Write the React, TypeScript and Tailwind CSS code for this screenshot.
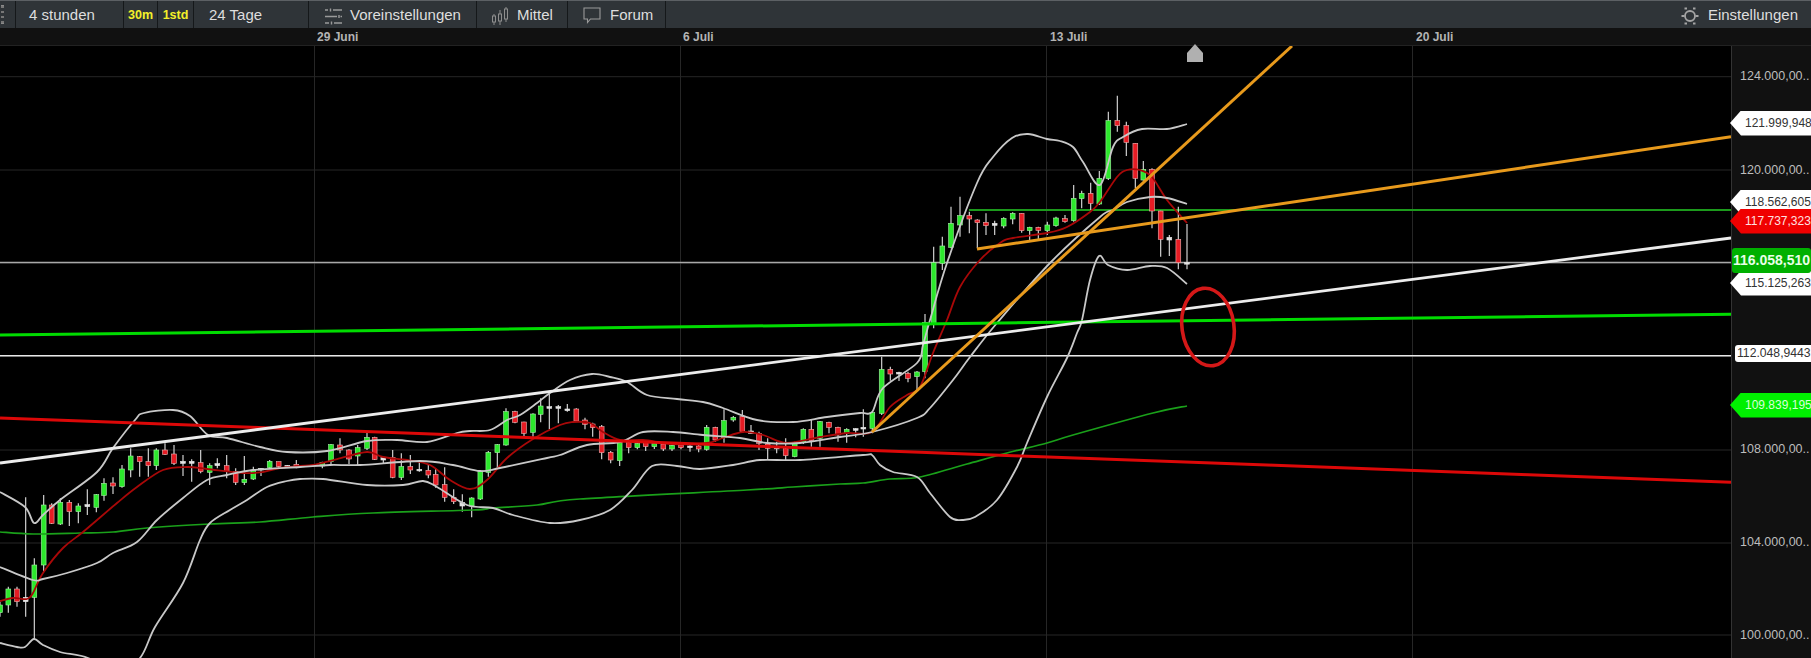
import { Fragment } from "react";

type Kind = "g" | "r" | "w";
type Candle = [number, number, number, number, number, Kind];

// candles read off the chart: [x, wick top, body top, body bottom, wick bottom]
// each group is measured at 3x from its own origin
const groups: { ox: number; oy: number; items: Candle[] }[] = [
  {
    ox: 0,
    oy: 420,
    items: [
      [0, 545, 555, 578, 590, "g"],
      [25, 500, 507, 555, 578, "g"],
      [51, 500, 507, 545, 560, "r"],
      [77, 232, 532, 545, 590, "w"],
      [103, 415, 435, 532, 660, "g"],
      [131, 225, 255, 435, 455, "g"],
      [155, 250, 255, 310, 312, "r"],
      [181, 235, 247, 312, 315, "g"],
      [208, 240, 247, 275, 318, "r"],
      [235, 250, 258, 275, 310, "g"],
      [262, 208, 254, 260, 285, "w"],
      [289, 222, 224, 262, 277, "g"],
      [312, 175, 190, 226, 242, "g"],
      [339, 172, 189, 198, 222, "r"],
      [366, 135, 147, 200, 203, "g"],
      [392, 85, 108, 150, 172, "g"],
      [419, 108, 110, 125, 170, "r"],
      [445, 85, 125, 137, 170, "r"],
      [469, 85, 90, 137, 150, "g"],
      [495, 70, 90, 103, 105, "r"],
      [522, 75, 102, 130, 135, "r"],
      [549, 105, 124, 130, 168, "w"],
      [575, 118, 124, 130, 185, "w"],
      [602, 90, 128, 155, 160, "r"],
      [629, 130, 137, 157, 195, "g"],
      [652, 115, 131, 137, 145, "w"],
      [680, 105, 137, 155, 175, "r"],
      [707, 145, 155, 187, 195, "r"],
      [733, 108, 178, 188, 195, "g"],
      [760, 140, 150, 177, 180, "g"],
      [783, 145, 145, 150, 168, "w"],
      [809, 120, 124, 143, 145, "g"],
      [836, 125, 125, 140, 145, "r"],
      [862, 135, 136, 141, 143, "w"],
      [889, 120, 133, 141, 145, "r"],
    ],
  },
  {
    ox: 280,
    oy: 390,
    items: [
      [127, 215, 218, 228, 235, "g"],
      [153, 162, 164, 215, 225, "g"],
      [180, 145, 165, 180, 190, "r"],
      [207, 178, 180, 207, 222, "r"],
      [233, 165, 173, 198, 228, "g"],
      [261, 128, 142, 175, 180, "g"],
      [284, 140, 142, 208, 210, "r"],
      [310, 200, 203, 210, 220, "w"],
      [338, 180, 203, 262, 265, "r"],
      [364, 190, 230, 262, 270, "g"],
      [391, 195, 230, 240, 252, "r"],
      [418, 210, 238, 242, 245, "w"],
      [445, 222, 241, 255, 265, "r"],
      [467, 235, 253, 285, 293, "r"],
      [494, 232, 284, 322, 335, "r"],
      [521, 298, 322, 335, 342, "r"],
      [547, 313, 338, 348, 365, "w"],
      [575, 322, 324, 348, 382, "g"],
      [601, 240, 243, 327, 330, "g"],
      [625, 183, 187, 247, 260, "g"],
      [652, 162, 164, 188, 235, "g"],
      [678, 55, 65, 165, 167, "g"],
      [705, 62, 65, 97, 100, "r"],
      [732, 95, 96, 130, 138, "r"],
      [759, 70, 72, 127, 140, "g"],
      [782, 25, 48, 73, 97, "g"],
      [808, 10, 50, 55, 118, "w"],
      [835, 45, 50, 55, 100, "w"],
      [862, 42, 57, 62, 65, "w"],
      [889, 55, 57, 93, 95, "r"],
    ],
  },
  {
    ox: 560,
    oy: 370,
    items: [
      [75, 143, 150, 163, 178, "r"],
      [98, 158, 162, 173, 200, "r"],
      [125, 165, 170, 248, 268, "r"],
      [152, 243, 247, 270, 280, "r"],
      [179, 215, 218, 272, 288, "g"],
      [206, 205, 218, 233, 250, "r"],
      [232, 217, 220, 233, 238, "g"],
      [257, 215, 218, 230, 243, "r"],
      [283, 218, 220, 230, 237, "g"],
      [310, 220, 222, 237, 243, "r"],
      [336, 224, 226, 237, 243, "g"],
      [363, 223, 225, 233, 238, "r"],
      [390, 226, 228, 233, 245, "w"],
      [416, 225, 228, 237, 247, "r"],
      [440, 165, 172, 238, 242, "g"],
      [466, 170, 172, 210, 215, "r"],
      [492, 118, 152, 203, 218, "g"],
      [520, 138, 142, 150, 155, "g"],
      [547, 120, 140, 185, 187, "r"],
      [573, 165, 183, 190, 192, "w"],
      [597, 185, 190, 220, 240, "r"],
      [623, 205, 222, 235, 270, "r"],
      [650, 215, 232, 236, 250, "w"],
      [677, 205, 236, 257, 273, "r"],
      [704, 215, 218, 260, 262, "g"],
      [730, 175, 178, 217, 222, "g"],
      [754, 150, 178, 212, 230, "r"],
      [780, 153, 155, 205, 230, "g"],
      [807, 155, 157, 172, 190, "r"],
      [834, 170, 172, 195, 215, "r"],
      [860, 175, 178, 190, 218, "g"],
      [887, 175, 176, 181, 202, "w"],
      [910, 118, 172, 177, 200, "w"],
      [937, 125, 128, 175, 190, "g"],
    ],
  },
  {
    ox: 840,
    oy: 300,
    items: [
      [125, 170, 208, 340, 345, "g"],
      [151, 200, 208, 222, 242, "r"],
      [177, 215, 217, 222, 243, "w"],
      [204, 215, 220, 235, 247, "r"],
      [231, 213, 216, 230, 270, "g"],
      [255, 42, 67, 215, 235, "g"],
    ],
  },
  {
    ox: 900,
    oy: 80,
    items: [
      [101, 500, 548, 730, 745, "g"],
      [127, 470, 498, 550, 570, "g"],
      [153, 380, 430, 502, 505, "g"],
      [180, 350, 407, 435, 470, "g"],
      [208, 395, 407, 417, 460, "r"],
      [232, 418, 420, 428, 505, "r"],
      [258, 400, 427, 437, 465, "r"],
      [284, 422, 430, 436, 465, "w"],
      [311, 412, 415, 438, 445, "g"],
      [338, 397, 400, 417, 433, "g"],
      [365, 400, 400, 452, 458, "r"],
      [389, 440, 442, 452, 480, "g"],
      [415, 440, 442, 451, 478, "r"],
      [442, 425, 435, 452, 465, "g"],
      [468, 410, 414, 437, 440, "g"],
      [495, 405, 416, 425, 428, "r"],
      [521, 315, 355, 422, 425, "g"],
      [545, 332, 340, 356, 385, "g"],
      [572, 308, 340, 370, 390, "r"],
      [598, 273, 295, 372, 375, "g"],
      [625, 95, 122, 296, 300, "g"],
      [652, 47, 122, 137, 155, "r"],
      [679, 125, 137, 187, 228, "r"],
      [706, 190, 190, 295, 325, "r"],
      [730, 243, 268, 300, 302, "g"],
      [756, 265, 268, 393, 445, "r"],
      [782, 392, 393, 478, 530, "r"],
      [808, 465, 472, 480, 528, "w"],
      [835, 380, 478, 548, 568, "r"],
      [861, 432, 548, 552, 568, "w"],
    ],
  },
];

const upper =
  "0,492 25,507 34,523 43,515 60,500 97,472 113,448 135,420 144,413 173,410 190,416 208,435 227,438 260,447 287,452 327,451 367,441 397,440 427,442 457,433 470,431 490,430 507,420 520,415 537,403 550,393 570,380 592,374 610,377 627,382 647,395 677,399 703,402 723,408 757,420 793,422 827,417 860,413 872,412 883,388 917,363 923,345 930,320 947,263 977,183 993,157 1012,138 1028,134 1047,139 1060,141 1073,147 1083,162 1100,185 1113,147 1123,137 1142,129 1167,129 1187,124";
const lower =
  "0,643 17,647 25,647 34,639 43,645 60,652 88,658 115,675 140,658 155,627 183,583 200,540 210,523 230,510 247,500 267,487 287,481 300,479 323,479 367,485 403,485 423,481 437,487 467,505 493,508 513,515 550,523 580,520 610,510 632,490 652,466 677,466 700,469 733,465 760,460 800,460 863,455 872,455 880,465 893,472 917,477 930,493 950,517 962,520 975,517 997,500 1017,467 1027,443 1047,397 1067,358 1077,333 1082,320 1090,280 1099,256 1108,265 1127,270 1150,266 1167,268 1187,284";
const middle =
  "0,567 33,580 43,579 67,573 97,563 113,553 137,542 157,520 183,498 207,480 227,475 253,470 300,467 330,465 360,465 420,461 453,465 480,471 500,468 547,458 560,455 587,445 620,442 643,432 673,432 703,435 740,438 767,443 800,443 840,437 872,432 917,418 930,408 953,380 970,357 997,323 1050,263 1100,217 1113,210 1127,202 1150,197 1167,198 1187,204";
const redMa =
  "0,601 13,598 27,599 33,593 43,573 63,548 83,532 117,503 137,487 163,470 187,467 207,469 243,473 263,472 280,468 300,466 313,465 337,459 367,452 383,457 407,460 430,465 450,480 470,489 487,480 507,458 533,439 560,425 573,422 590,423 603,432 620,440 643,440 673,444 707,443 723,438 743,432 763,435 787,443 820,437 847,433 872,432 890,407 907,395 920,387 933,353 947,320 960,287 980,260 1000,243 1013,238 1047,233 1067,227 1090,212 1100,202 1117,177 1127,170 1140,170 1152,177 1167,200 1187,223";
const greenMa =
  "0,532 33,534 80,533 113,532 147,528 210,524 260,522 313,517 373,513 473,510 493,508 537,505 580,499 747,490 793,487 840,484 863,483 890,479 920,477 967,464 1007,453 1047,443 1073,435 1153,413 1187,406";

const gridX = [314.5, 680.5, 1046.5, 1412.5];
const gridY = [76.7, 170, 263, 356, 450, 543, 635];

const axis = [
  { y: 76, t: "124.000,00.." },
  { y: 170, t: "120.000,00.." },
  { y: 449, t: "108.000,00.." },
  { y: 542, t: "104.000,00.." },
  { y: 635, t: "100.000,00.." },
];

const bodyFill = { g: "#2ce82c", r: "#e61c24", w: "#e4e4e4" };
const bodyEdge = { g: "#a8f0a8", r: "#f0b0b0", w: "#e4e4e4" };

// catmull-rom through the measured points, the bands are smooth curves
function smooth(raw: string) {
  const p = raw.split(" ").map((s) => s.split(",").map(Number));
  let d = `M${p[0][0]} ${p[0][1]}`;
  for (let i = 0; i < p.length - 1; i++) {
    const a = p[Math.max(i - 1, 0)];
    const b = p[i];
    const c = p[i + 1];
    const e = p[Math.min(i + 2, p.length - 1)];
    const c1x = b[0] + (c[0] - a[0]) / 6;
    const c1y = b[1] + (c[1] - a[1]) / 6;
    const c2x = c[0] - (e[0] - b[0]) / 6;
    const c2y = c[1] - (e[1] - b[1]) / 6;
    d += `C${c1x} ${c1y} ${c2x} ${c2y} ${c[0]} ${c[1]}`;
  }
  return d;
}

function Candles() {
  return (
    <>
      {groups.map((g) =>
        g.items.map(([zx, wt, bt, bb, wb, k]) => {
          const x = g.ox + zx / 3;
          const y = (v: number) => g.oy + v / 3;
          return (
            <Fragment key={`${g.ox}-${zx}`}>
              <line x1={x} x2={x} y1={y(wt)} y2={y(wb)} stroke="#d0d0d0" strokeWidth={1.2} />
              <rect
                x={x - 2.4}
                y={y(bt)}
                width={4.8}
                height={Math.max(y(bb) - y(bt), 1.5)}
                fill={bodyFill[k]}
                stroke={bodyEdge[k]}
                strokeWidth={0.6}
              />
            </Fragment>
          );
        }),
      )}
    </>
  );
}

function Chart() {
  return (
    <svg viewBox="0 46 1731 612" className="block h-[612px] w-[1731px] blur-[0.4px]">
      {gridY.map((y) => (
        <line key={y} x1={0} x2={1731} y1={y} y2={y} stroke="#262626" strokeWidth={1} />
      ))}
      {gridX.map((x) => (
        <line key={x} x1={x} x2={x} y1={46} y2={658} stroke="#262626" strokeWidth={1} />
      ))}
      <line x1={969} x2={1731} y1={210} y2={210} stroke="#1c9a1c" strokeWidth={1.8} />
      <line x1={0} x2={1731} y1={262.5} y2={262.5} stroke="#a8a8a8" strokeWidth={1.5} />
      <line x1={0} x2={1731} y1={355.7} y2={355.7} stroke="#e8e8e8" strokeWidth={1.6} />
      <Candles />
      <path d={smooth(greenMa)} fill="none" stroke="#1aa01a" strokeWidth={1.7} />
      <path d={smooth(redMa)} fill="none" stroke="#a80808" strokeWidth={1.8} />
      <path d={smooth(upper)} fill="none" stroke="#c8c8c8" strokeWidth={1.8} />
      <path d={smooth(middle)} fill="none" stroke="#c8c8c8" strokeWidth={1.8} />
      <path d={smooth(lower)} fill="none" stroke="#c8c8c8" strokeWidth={1.8} />
      <line x1={0} y1={418} x2={1731} y2={482.3} stroke="#dc0808" strokeWidth={3} />
      <line x1={0} y1={335} x2={1731} y2={314.3} stroke="#00dc00" strokeWidth={3} />
      <line x1={0} y1={463} x2={1731} y2={238} stroke="#ececec" strokeWidth={2.8} />
      <line x1={872} y1={432} x2={1292} y2={46} stroke="#e89a1c" strokeWidth={3} />
      <line x1={977} y1={249} x2={1731} y2={136.7} stroke="#e89a1c" strokeWidth={3} />
      <ellipse
        cx={1208}
        cy={327}
        rx={26}
        ry={39}
        transform="rotate(-8 1208 327)"
        fill="none"
        stroke="#d41818"
        strokeWidth={3.6}
      />
    </svg>
  );
}

function Tag({ y, text, tone }: { y: number; text: string; tone: "white" | "red" | "lime" }) {
  const bg = { white: "bg-white text-[#333]", red: "bg-[#f00000] text-[#ffe0e0]", lime: "bg-[#00f000] text-[#d8ffd8]" }[tone];
  return (
    <div
      className={`absolute left-[-2px] flex h-[25px] w-[82px] items-center overflow-hidden pl-[15px] text-[12px] [clip-path:polygon(0_50%,11px_0,100%_0,100%_100%,11px_100%)] ${bg}`}
      style={{ top: y - 46 - 12.5 }}
    >
      {text}
    </div>
  );
}

function PriceAxis() {
  return (
    <div className="relative h-[612px] w-[80px] border-l border-[#333] bg-[#111]">
      {axis.map((a) => (
        <div
          key={a.t}
          className="absolute left-[8px] whitespace-nowrap text-[12.5px] leading-none text-[#bdbdbd]"
          style={{ top: a.y - 46 - 6.5 }}
        >
          {a.t}
        </div>
      ))}
      <Tag y={123} text="121.999,948" tone="white" />
      <Tag y={202} text="118.562,605" tone="white" />
      <Tag y={221} text="117.737,323" tone="red" />
      <Tag y={283} text="115.125,263" tone="white" />
      <Tag y={405} text="109.839,195" tone="lime" />
      <div className="absolute left-0 top-[202px] flex h-[25px] w-[79px] items-center overflow-hidden rounded-[3px] bg-[#00b000] pl-[1px] text-[14px] font-bold text-[#e8ffe8]">
        116.058,510
      </div>
      <div className="absolute left-[3px] top-[299px] flex h-[17px] w-[78px] items-center overflow-hidden rounded-[3px] bg-white pl-[2px] text-[12.2px] text-[#333]">
        112.048,9443
      </div>
    </div>
  );
}

function Cell({ w, children, bar = true }: { w: string; children: React.ReactNode; bar?: boolean }) {
  return (
    <div className={`flex h-full shrink-0 items-center ${w} ${bar ? "border-r border-[#15181a]" : ""}`}>
      {children}
    </div>
  );
}

function SlidersIcon() {
  return (
    <svg width="18" height="18" viewBox="0 0 18 18" stroke="#9a9a9a" strokeWidth="1.4" fill="none" className="shrink-0">
      <path d="M1 3h3M6.5 1.5v3M9 3h9M1 9.5h12M15 8v3M16.5 9.5H18M1 16h4M7.5 14.5v3M10 16h8" />
    </svg>
  );
}

function CandlesIcon() {
  return (
    <svg width="18" height="20" viewBox="0 0 18 20" stroke="#8e8e8e" strokeWidth="1" fill="none" className="shrink-0">
      <path d="M3 8v2M3 16v3M9 4v4M9 15v4M15 1v2M15 13v3" />
      <rect x="1.5" y="10" width="3" height="6" />
      <rect x="7.5" y="8" width="3" height="7" />
      <rect x="13.5" y="3" width="3" height="10" />
    </svg>
  );
}

function ChatIcon() {
  return (
    <svg width="18" height="17" viewBox="0 0 18 17" stroke="#9a9a9a" strokeWidth="1.1" fill="none" className="shrink-0">
      <path d="M1 1h16v11H7.5L4.5 15.5V12H1z" />
    </svg>
  );
}

function GearIcon() {
  return (
    <svg width="18" height="18" viewBox="0 0 18 18" stroke="#a4a4a4" strokeWidth="1.8" fill="none" className="shrink-0">
      <circle cx="9" cy="9" r="5" />
      <path d="M0.5 9h3M14.5 9h3M3.5 1.5h2.5M12 1.5h2.5M3.5 16.5h2.5M12 16.5h2.5" />
    </svg>
  );
}

export default function App() {
  return (
    <div className="h-[658px] w-[1811px] overflow-hidden bg-black text-[15px] text-[#dedede] [font-family:'Liberation_Sans',Arial,sans-serif]">
      <div className="flex h-[28px] items-stretch border-t border-[#5c6064] bg-[#2f3438] pb-0">
        <Cell w="w-[16px]">
          <div className="ml-[1px] h-[19px] w-[3px] border-y border-[#8a8a8a] [background:repeating-linear-gradient(#777_0_2px,transparent_2px_5px)]" />
        </Cell>
        <Cell w="w-[108px] pl-[13px] pt-[2px]">4 stunden</Cell>
        <Cell w="w-[34px] justify-center pt-[2px]">
          <span className="text-[12.5px] font-bold text-[#f4f02a]">30m</span>
        </Cell>
        <Cell w="w-[36px] justify-center pt-[2px]">
          <span className="text-[12.5px] font-bold text-[#f4f02a]">1std</span>
        </Cell>
        <Cell w="w-[115px] pl-[15px] pt-[2px]">24 Tage</Cell>
        <Cell w="w-[168px] gap-[8px] pl-[15px] pt-[2px]">
          <SlidersIcon />
          Voreinstellungen
        </Cell>
        <Cell w="w-[91px] gap-[8px] pl-[14px] pt-[2px]">
          <CandlesIcon />
          Mittel
        </Cell>
        <Cell w="w-[98px] gap-[9px] pl-[15px] pt-[2px]">
          <ChatIcon />
          Forum
        </Cell>
        <div className="ml-auto flex items-center gap-[9px] pr-[13px] pt-[2px]">
          <GearIcon />
          Einstellungen
        </div>
      </div>

      <div className="relative flex h-[18px] items-center border-b border-[#222] bg-[#111] pt-[1px] text-[12px] font-bold text-[#b4b4b4]">
        <span className="ml-[317px] w-[366px]">29 Juni</span>
        <span className="w-[367px]">6 Juli</span>
        <span className="w-[366px]">13 Juli</span>
        <span>20 Juli</span>
      </div>

      <div className="relative flex">
        <Chart />
        <PriceAxis />
        <svg width="16" height="18" viewBox="0 0 16 18" className="absolute left-[1187px] top-[-2px]">
          <path d="M8 0L16 9V18H0V9Z" fill="#b0b0b0" />
        </svg>
      </div>
    </div>
  );
}
